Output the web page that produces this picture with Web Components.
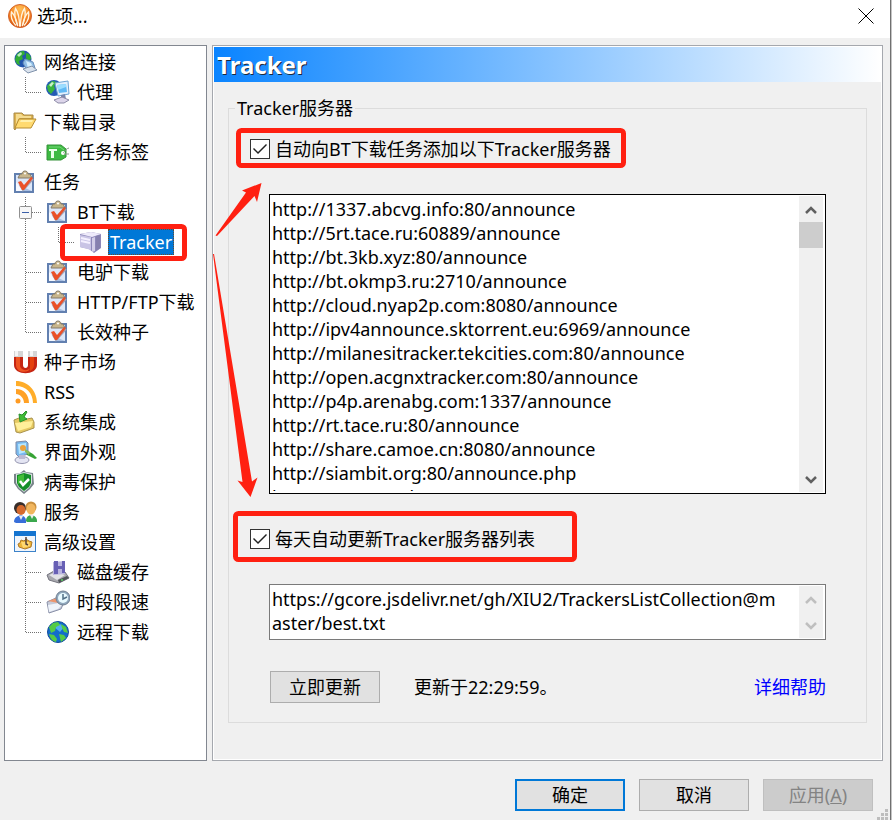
<!DOCTYPE html>
<html lang="zh-CN">
<head>
<meta charset="UTF-8">
<meta name="viewport" content="width=device-width, initial-scale=1">
<title>选项...</title>
<style>
    body {
        margin: 0;
        background: #c4c4c4;
        color: #000;
        font: 18px/24px "Noto Sans", "Noto Sans CJK SC", sans-serif;
    }
</style>
</head>
<body>
<options-window>
    <options-tree slot="nav"></options-tree>
    <options-page heading="Tracker">
        <option-group legend="Tracker服务器">
            <check-option>自动向BT下载任务添加以下Tracker服务器</check-option>
            <text-area rows="12" label="Tracker服务器" focused>http://1337.abcvg.info:80/announce
http://5rt.tace.ru:60889/announce
http://bt.3kb.xyz:80/announce
http://bt.okmp3.ru:2710/announce
http://cloud.nyap2p.com:8080/announce
http://ipv4announce.sktorrent.eu:6969/announce
http://milanesitracker.tekcities.com:80/announce
http://open.acgnxtracker.com:80/announce
http://p4p.arenabg.com:1337/announce
http://rt.tace.ru:80/announce
http://share.camoe.cn:8080/announce
http://siambit.org:80/announce.php
http://t.nyaatracker.com:80/announce</text-area>
            <check-option>每天自动更新Tracker服务器列表</check-option>
            <text-area rows="2" label="更新地址" idle>https://gcore.jsdelivr.net/gh/XIU2/TrackersListCollection@master/best.txt</text-area>
            <update-bar>
                <push-button>立即更新</push-button>
                <span slot="status">更新于22:29:59。</span>
                <help-link slot="help">详细帮助</help-link>
            </update-bar>
        </option-group>
    </options-page>
    <push-button slot="actions" primary>确定</push-button>
    <push-button slot="actions">取消</push-button>
    <push-button slot="actions" disabled>应用(<u>A</u>)</push-button>
</options-window>
<red-marks></red-marks>

<script>
const ICONS = {
    app: `
        <defs><radialGradient id="o" cx=".5" cy=".2" r=".9"><stop offset="0" stop-color="#ffbe55"/><stop offset=".55" stop-color="#f58220"/><stop offset="1" stop-color="#cc3f06"/></radialGradient></defs>
        <circle cx="12" cy="12" r="11.500" fill="url(#o)" stroke="#d4642a"/>
        <g fill="none" stroke="#fff3dc" stroke-width="1.300" stroke-linecap="round">
            <path d="M7.500 21C4 17 2.500 12 3.500 8c3 3 5 7 6 13.500"/>
            <path d="M9.500 21.500C6.500 14 6 9 7.500 4.500c3 4 4 10 4 17.500"/>
            <path d="M12.500 22c0-7.500 1-13.500 4-17.500 1.500 4.500 1 9.500-2 17"/>
            <path d="M14.500 21.500c1-6.500 3-10.500 6-13.500 1 4-.5 9-4 13"/>
        </g>`,
    globe: `
        <circle cx="10" cy="9" r="8.500" fill="#2256ad"/>
        <path d="M3 6c2-4 5-5 8-5l1 3-3 2 1 3-4 2 1 4-3-1-2-4zM13 3c3 0 5 3 5 6l-3 2-2-3z" fill="#32ad35"/>
        <path d="M4 5l4-3 1 2-3 3z" fill="#bbebc1"/>
        <path d="M12 9l8 3 2 6-8 2-4-7z" fill="#8fbde6" stroke="#6c91bd"/>
        <path d="M13 11l5 2 2 4-5 1z" fill="#d4efff"/>
        <path d="M10 19l9-3 5 4-9 3z" fill="#d9e2ed" stroke="#7f91aa"/>`,
    proxy: `
        <circle cx="8" cy="8" r="8" fill="#245bb4"/>
        <path d="M1 6l5-5 5 1-3 4 1 3-4 5-3-3z" fill="#38b53f"/><path d="M3 5l3-3 2 1-3 4z" fill="#c8f2c8"/>
        <path d="M9 3l13-2 1 13-11 2z" fill="#e2effc" stroke="#6da4d4"/>
        <path d="M11 5l9-1 1 8-8 1z" fill="#5fb9f4"/><path d="M11 5l9-1v3l-8 3z" fill="#9bddff"/>
        <path d="M15 15l4-1 1 5h-5z" fill="#7987ae"/>
        <path d="M8 20l8-3 7 3-5 3h-6z" fill="#dcd5ea" stroke="#8d8ba7"/>`,
    folder: `
        <path d="M1 19V3h8l2 2h9v4H7L2 20z" fill="#dfb34d" stroke="#a88a4b"/>
        <path d="M3 4h5l2 2h8v2H6L3 15z" fill="#f5dc91"/>
        <path d="M6 9h17l-5 9H2z" fill="#ffda70" stroke="#b78d31"/>
        <path d="M8 10h12l-1 2H7z" fill="#fff0ad"/>`,
    tag: `
        <path d="M1 5h14l5 4v8l-5 3H1z" fill="#3dba42" stroke="#36923a"/>
        <path d="M3 7h11l4 3" fill="none" stroke="#75d778"/>
        <path d="M3 9h8v2H8v7H5v-7H3z" fill="#e9ffe8"/>
        <circle cx="17" cy="13" r="2" fill="#fff"/><path d="M17 13c2-1 2-4 6-5M18 14h5" fill="none" stroke="#8b9b8c"/>`,
    task: `
        <rect x="2" y="4" width="18" height="18" fill="#dce7f9" stroke="#6280b0" stroke-width="2"/>
        <path d="M3 14l16 7h-9z" fill="#a9bfe2"/><path d="M3 12l8 9H3z" fill="#f6f9ff"/>
        <path d="M5 8l2-4h2c0-4 6-4 6 0h2l2 4z" fill="#c8b68c" stroke="#857b68"/>
        <circle cx="12" cy="3.500" r="1" fill="#fff"/>
        <path d="M7 15l3 5 10-11" fill="none" stroke="#a3a3b6" stroke-width="2"/>
        <path d="M5 12l3-1 3 4 7-8 2 1-9 12h-2z" fill="#ea5029"/>`,
    server: `
        <path d="M1 4l11-2 10 2v14l-7 5-5-4-9-2z" fill="#8e88b9"/>
        <path d="M1 4l11-2 10 2-9 3z" fill="#eeeafa"/>
        <path d="M1 5l11 2v13L1 17z" fill="#c9c4e5"/>
        <path d="M13 8l3-1v14l-3 1z" fill="#d3cee8"/><path d="M17 6l4-1v13l-4 3z" fill="#8680ae"/>
        <path d="M2 8l9 2M2 11l9 2" stroke="#f4f0ff" stroke-width="2"/>`,
    magnet: `
        <path d="M1 6h9v9c0 4 5 4 5 0V6h9v9c0 11-23 11-23 0z" fill="#c52513"/>
        <path d="M3 7h4v8c0 5 7 7 10 3-1 6-14 5-14-3z" fill="#ef5421"/><path d="M17 7h4v8c0 3-2 5-4 6z" fill="#e4410d"/>
        <path d="M1 1h9v6H1zM15 1h9v6h-9z" fill="#d5d5d5"/><path d="M2 1h3v5H2zM17 1h3v5h-3z" fill="#f5f5f5"/>`,
    rss: `
        <path d="M3 1c12 0 21 10 21 22h-4C20 13 13 6 3 6z" fill="#ffad29"/>
        <path d="M3 9c8 0 13 6 13 14h-5c0-5-4-9-8-9z" fill="#ffa126"/>
        <circle cx="5" cy="21" r="2.500" fill="#ff9b22"/>`,
    integrate: `
        <path d="M1 10l5-2 3 2 10-2 2 4v6L7 23l-4-1z" fill="#e6c962" stroke="#a9924d"/>
        <path d="M2 13l18-2-2 6-13 4z" fill="#ffef9a"/>
        <path d="M13 1l-4 4-3-1 1 8 7-3-3-2 3-5z" fill="#42bd37" stroke="#29912c"/>`,
    theme: `
        <path d="M3 2l10-1 2 2v11l-9 3-3-3z" fill="#78b8ed" stroke="#7d89a6"/>
        <path d="M5 4l8-1v9l-7 2z" fill="#b6e6ff"/><circle cx="10" cy="8" r="3" fill="#eba13e"/>
        <ellipse cx="9" cy="20" rx="7" ry="3.500" fill="#e4e5f3" stroke="#9697b1"/>
        <path d="M6 15h6v4H6z" fill="#bbb9d3"/>
        <path d="M13 10l7 4 4 4-2 1-8-4z" fill="#36a334"/><path d="M12 9l5 3-1 3-4-3z" fill="#8ab95d"/>`,
    shield: `
        <path d="M11 0l2 2 7 1 1 11-4 5-6 5-6-5-4-6V4l6-1z" fill="#788389"/>
        <path d="M11 2l8 2v9l-3 5-5 4-5-4-3-5V4z" fill="#d8dfe1"/>
        <path d="M11 3l7 2v8l-2 4-5 4-5-4-2-4V5z" fill="#158f28"/>
        <path d="M5 6l6-2v8l-6 2z" fill="#43bd38"/>
        <path d="M7 11l3 4 6-6" fill="none" stroke="#fff" stroke-width="2.500"/>`,
    people: `
        <path d="M1 22c0-8 12-9 12-1v2H3z" fill="#386ed9"/><path d="M13 21c0-8 11-7 11 0v1H14z" fill="#3ba84d"/>
        <circle cx="7" cy="8" r="6" fill="#382e2a"/><ellipse cx="8" cy="10" rx="4.500" ry="5" fill="#d66a2d"/>
        <circle cx="18" cy="7" r="5.500" fill="#c98f3e"/><ellipse cx="18" cy="9" rx="4.500" ry="5.500" fill="#f1b65e"/>
        <path d="M6 16h4l-2 4zM17 15h4l-2 4z" fill="#eee"/>`,
    advanced: `
        <rect x="1.500" y="2.500" width="21" height="19" fill="#f0f5fb" stroke="#3c82c9"/>
        <path d="M1 1h22v5H1z" fill="#1474d0"/>
        <path d="M5 14l2-1 1-3 3 1 2-2 3 2 3 1-1 5-3 1-3 1-3-1-3-1z" fill="#eeb536" stroke="#af7b2a"/>
        <path d="M8 12h8l1 4-7 2z" fill="#ffd870"/>
        <path d="M13 7v7l2 1" fill="none" stroke="#554238" stroke-width="1.500"/>`,
    disk: `
        <path d="M1 15l7-4 11 1 4 6-10 5-10-3z" fill="#a8a8ae" stroke="#75757f"/>
        <path d="M3 15l7-3 9 3-8 5z" fill="#e2e2e6"/><path d="M12 20l9-4 2 2-10 5z" fill="#51545a"/>
        <path d="M7 2l12-1v13l-12 1z" fill="#b9b4df"/>
        <path d="M8 1h4v5h4V1h3v12h-3V9h-4v5H8z" fill="#6860b5"/><circle cx="16" cy="20" r="1" fill="#59d060"/>`,
    schedule: `
        <path d="M1 12l11-5 7 3-4 9-12 4z" fill="#c6cbd9" stroke="#8a91a9"/>
        <path d="M2 11l9-3 6 2-5 3z" fill="#ec966f"/><path d="M2 15l11-2 3 2-4 4-9 3z" fill="#eff4fb"/>
        <circle cx="17" cy="8" r="7" fill="#8fa7bc" stroke="#717f92"/><circle cx="17" cy="8" r="5" fill="#e9faff"/>
        <path d="M17 4v5l4-2" fill="none" stroke="#527087" stroke-width="1.500"/>`,
    remote: `
        <circle cx="12" cy="12" r="10.500" fill="#126ccc" stroke="#124d9c"/>
        <path d="M8 7l6-3 4 3-4 5z" fill="#50aef1"/>
        <path d="M3 7l4-4 5-1 2 3-4 2-1 4-4 2zM15 4l5 3 2 6-4-1-2-4zM3 14l5 1 3 4-1 3c-4-1-6-4-7-8zM13 14l5 1 2 3-5 4z" fill="#54cb46"/>`
};

function icon(name) {
    return `<svg class="icon" width="24" height="24" viewBox="0 0 24 24" aria-hidden="true">${ICONS[name]}</svg>`;
}

class OptionsWindow extends HTMLElement {
    constructor() {
        super();
        this.attachShadow({ mode: 'open' }).innerHTML = `
            <style>
                :host {
                    display: flex;
                    flex-direction: column;
                    min-height: 100vh;
                    margin-right: 1px;
                    box-sizing: border-box;
                    border-right: 1px solid #707070;
                    background: #f0f0f0;
                }
                header {
                    display: flex;
                    align-items: center;
                    height: 38px;
                    padding: 0 16px 6px 8px;
                    box-sizing: border-box;
                    background: #fff;
                }
                h1 {
                    flex: 1;
                    margin: 0 0 0 5px;
                    font-size: 18px;
                    font-weight: 400;
                }
                header button {
                    display: flex;
                    padding: 0;
                    border: 0;
                    background: none;
                }
                main {
                    flex: 1;
                    display: grid;
                    grid-template-columns: 203px 1fr;
                    gap: 5px;
                    padding: 7px 7px 0 4px;
                }
                footer {
                    display: flex;
                    justify-content: flex-end;
                    gap: 14px;
                    padding: 18px 17px 9px;
                    position: relative;
                }
                .grip {
                    position: absolute;
                    right: 2px;
                    bottom: 0;
                }
            </style>
            <header>
                ${icon('app')}
                <h1>选项...</h1>
                <button type="button" aria-label="关闭">
                    <svg width="16" height="16" viewBox="0 0 16 16"><path d="M.5.5l15 15M15.500.5l-15 15" stroke="#000"/></svg>
                </button>
            </header>
            <main>
                <slot name="nav"></slot>
                <slot></slot>
            </main>
            <footer>
                <slot name="actions"></slot>
                <svg class="grip" width="12" height="12" viewBox="0 0 12 12" fill="#bdbdbd"><path d="M9 1h3v3H9zM5 5h3v3H5zM9 5h3v3H9zM1 9h3v3H1zM5 9h3v3H5zM9 9h3v3H9z"/></svg>
            </footer>
        `;
    }
}

// guides: one entry per indent level, drawn left of the icon
const TREE = [
    { icon: 'globe', label: '网络连接' },
    { icon: 'proxy', label: '代理', guides: ['last'] },
    { icon: 'folder', label: '下载目录' },
    { icon: 'tag', label: '任务标签', guides: ['last'] },
    { icon: 'task', label: '任务' },
    { icon: 'task', label: 'BT下载', guides: ['open'] },
    { icon: 'server', label: 'Tracker', guides: ['line', 'last'], selected: true },
    { icon: 'task', label: '电驴下载', guides: ['mid'] },
    { icon: 'task', label: 'HTTP/FTP下载', guides: ['mid'] },
    { icon: 'task', label: '长效种子', guides: ['last'] },
    { icon: 'magnet', label: '种子市场' },
    { icon: 'rss', label: 'RSS' },
    { icon: 'integrate', label: '系统集成' },
    { icon: 'theme', label: '界面外观' },
    { icon: 'shield', label: '病毒保护' },
    { icon: 'people', label: '服务' },
    { icon: 'advanced', label: '高级设置' },
    { icon: 'disk', label: '磁盘缓存', guides: ['mid'] },
    { icon: 'schedule', label: '时段限速', guides: ['mid'] },
    { icon: 'remote', label: '远程下载', guides: ['last'] }
];

const GUIDES = {
    line: '<path d="M12.500 0v30"/>',
    mid: '<path d="M12.500 0v30M13 15.500h16"/>',
    last: '<path d="M12.500 0v16M13 15.500h16"/>',
    open: '<path d="M12.500 0v30M13 15.500h16"/><g stroke-dasharray="none"><rect x="6.500" y="9.500" width="12" height="12" rx="1" fill="#f7f7f7" stroke="#919191"/><path d="M9 15.500h7" stroke="#3b5fa8"/></g>'
};

class OptionsTree extends HTMLElement {
    constructor() {
        super();
        const rows = TREE.map(item => `
            <li role="treeitem" aria-level="${(item.guides || []).length + 1}" aria-selected="${!!item.selected}">
                ${(item.guides || []).map(g => `<svg width="33" height="30" fill="none" stroke="#707070" stroke-dasharray="1 1">${GUIDES[g]}</svg>`).join('')}
                ${icon(item.icon)}
                <span>${item.label}</span>
            </li>`).join('');

        this.attachShadow({ mode: 'open' }).innerHTML = `
            <style>
                :host {
                    display: block;
                    border: 1px solid #828790;
                    background: #fff;
                }
                ul {
                    margin: 0;
                    padding: 1px 0 0 8px;
                    list-style: none;
                }
                li {
                    display: flex;
                    align-items: center;
                    height: 30px;
                    white-space: nowrap;
                }
                svg {
                    flex: none;
                }
                span {
                    margin-left: 5px;
                    padding: 1px 2px;
                }
                li[aria-selected="true"] span {
                    background: #0078d7;
                    color: #fff;
                    outline: 1px dotted #6b4a2a;
                    outline-offset: -1px;
                }
            </style>
            <ul role="tree">${rows}</ul>
        `;
    }
}

class OptionsPage extends HTMLElement {
    constructor() {
        super();
        this.attachShadow({ mode: 'open' }).innerHTML = `
            <style>
                :host {
                    display: block;
                    border: 1px solid #a5a8ae;
                    min-width: 0;
                }
                .page {
                    box-sizing: border-box;
                    height: 100%;
                    border: 1px solid #fff;
                }
                h2 {
                    margin: 0;
                    padding: 0 3px;
                    font-size: 24px;
                    line-height: 35px;
                    color: #fff;
                    text-shadow: 1px 1px 0 #1b2a3c;
                    background: linear-gradient(90deg, #0a84ff, #fff);
                }
                .content {
                    padding: 14px;
                }
            </style>
            <div class="page">
                <h2>${this.getAttribute('heading')}</h2>
                <div class="content"><slot></slot></div>
            </div>
        `;
    }
}

class OptionGroup extends HTMLElement {
    constructor() {
        super();
        this.attachShadow({ mode: 'open' }).innerHTML = `
            <style>
                :host {
                    display: block;
                }
                fieldset {
                    margin: 0;
                    padding: 14px 40px 19px;
                    border: 1px solid #dcdcdc;
                    min-width: 0;
                }
                legend {
                    margin-left: -34px;
                    padding: 0 2px;
                }
                .rows {
                    display: flex;
                    flex-direction: column;
                    gap: 30px;
                }
            </style>
            <fieldset>
                <legend>${this.getAttribute('legend')}</legend>
                <div class="rows"><slot></slot></div>
            </fieldset>
        `;
    }
}

class CheckOption extends HTMLElement {
    constructor() {
        super();
        this.attachShadow({ mode: 'open' }).innerHTML = `
            <style>
                :host {
                    display: block;
                    margin-left: -19px;
                }
                label {
                    display: flex;
                    align-items: center;
                    gap: 5px;
                    height: 30px;
                }
                input {
                    appearance: none;
                    flex: none;
                    width: 20px;
                    height: 20px;
                    margin: 0;
                    border: 1px solid #333;
                    background: #fff;
                }
                input:checked::before {
                    content: '';
                    display: block;
                    height: 18px;
                    background: #222;
                    clip-path: polygon(2px 9px, 3px 8px, 7px 12px, 15px 4px, 16px 5px, 7px 14px);
                }
            </style>
            <label><input type="checkbox" checked><span><slot></slot></span></label>
        `;
    }
}

class TextArea extends HTMLElement {
    constructor() {
        super();
        const idle = this.hasAttribute('idle');
        const focused = this.hasAttribute('focused');
        const arrow = idle ? '#bfbfbf' : '#606060';
        this.attachShadow({ mode: 'open' }).innerHTML = `
            <style>
                :host {
                    display: flex;
                    border: 1px solid ${focused ? '#000' : '#7a7a7a'};
                    padding: 1px 2px;
                    background: #fff;
                }
                textarea {
                    flex: 1;
                    min-width: 0;
                    height: ${focused ? 294 : 50}px;
                    margin: 1px 0;
                    padding: 0 16px 0 0;
                    border: 0;
                    outline: 0;
                    resize: none;
                    overflow: hidden;
                    background: none;
                    color: inherit;
                    font: inherit;
                    word-break: break-all;
                }
                .scroll {
                    display: flex;
                    flex-direction: column;
                    justify-content: space-between;
                    width: 24px;
                    background: #f0f0f0;
                }
                button {
                    display: flex;
                    align-items: center;
                    justify-content: center;
                    height: 26px;
                    padding: 0;
                    border: 0;
                    background: none;
                }
                .thumb {
                    height: 26px;
                    background: #cdcdcd;
                }
                .track {
                    flex: 1;
                }
            </style>
            <textarea rows="${this.getAttribute('rows')}" aria-label="${this.getAttribute('label')}" spellcheck="false"></textarea>
            <div class="scroll">
                <button type="button" tabindex="-1" aria-label="向上滚动"><svg width="12" height="12" viewBox="0 0 12 12"><path d="M1 10l5-5 5 5" fill="none" stroke="${arrow}" stroke-width="2.500"/></svg></button>
                <div class="track">${idle ? '' : '<div class="thumb"></div>'}</div>
                <button type="button" tabindex="-1" aria-label="向下滚动"><svg width="12" height="12" viewBox="0 0 12 12"><path d="M1 4l5 5 5-5" fill="none" stroke="${arrow}" stroke-width="2.500"/></svg></button>
            </div>
        `;
        this.shadowRoot.querySelector('textarea').value = this.textContent;
    }
}

class UpdateBar extends HTMLElement {
    constructor() {
        super();
        this.attachShadow({ mode: 'open' }).innerHTML = `
            <style>
                :host {
                    display: flex;
                    align-items: center;
                    gap: 34px;
                    padding: 1px 0 0 1px;
                }
                .status {
                    flex: 1;
                }
            </style>
            <slot></slot>
            <div class="status"><slot name="status"></slot></div>
            <slot name="help"></slot>
        `;
    }
}

class HelpLink extends HTMLElement {
    constructor() {
        super();
        this.attachShadow({ mode: 'open' }).innerHTML = `
            <style>
                :host { display: block; }
                a {
                    color: #00f;
                    text-decoration: none;
                }
            </style>
            <a href="#"><slot></slot></a>
        `;
    }
}

class PushButton extends HTMLElement {
    constructor() {
        super();
        this.attachShadow({ mode: 'open' }).innerHTML = `
            <style>
                :host {
                    display: block;
                }
                button {
                    display: block;
                    min-width: 110px;
                    height: 32px;
                    padding: 0 8px;
                    border: 1px solid #adadad;
                    background: #e1e1e1;
                    color: #000;
                    font: inherit;
                }
                :host([primary]) button {
                    border: 2px solid #0078d7;
                }
                button:disabled {
                    border-color: #bfbfbf;
                    background: #ccc;
                    color: #838383;
                }
            </style>
            <button type="button" ${this.hasAttribute('disabled') ? 'disabled' : ''}><slot></slot></button>
        `;
    }
}

// Red frames and arrows drawn over the dialog
class RedMarks extends HTMLElement {
    constructor() {
        super();
        this.attachShadow({ mode: 'open' }).innerHTML = `
            <style>
                :host {
                    position: absolute;
                    top: 0;
                    left: 0;
                    pointer-events: none;
                }
                svg { display: block; }
            </style>
            <svg width="640" height="580" viewBox="0 0 640 580" aria-hidden="true">
                <g fill="none" stroke="#ff2011" stroke-width="5">
                    <rect x="62.500" y="226.500" width="122" height="32" rx="3"/>
                    <rect x="238.500" y="130.500" width="385" height="35" rx="3"/>
                    <rect x="235.500" y="513.500" width="339" height="46" rx="3"/>
                </g>
                <g fill="#ff2011">
                    <path d="M215.500 235.500L246 192.500l-4-2L261.500 183 257 202l-2.500-6L217 236z"/>
                    <path d="M213 254l29.500 228-5-1.500L250.500 497l7-19.500-5.500 4L214 254z"/>
                </g>
            </svg>
        `;
    }
}

customElements.define('options-window', OptionsWindow);
customElements.define('options-tree', OptionsTree);
customElements.define('options-page', OptionsPage);
customElements.define('option-group', OptionGroup);
customElements.define('check-option', CheckOption);
customElements.define('text-area', TextArea);
customElements.define('update-bar', UpdateBar);
customElements.define('help-link', HelpLink);
customElements.define('push-button', PushButton);
customElements.define('red-marks', RedMarks);
</script>
</body>
</html>
